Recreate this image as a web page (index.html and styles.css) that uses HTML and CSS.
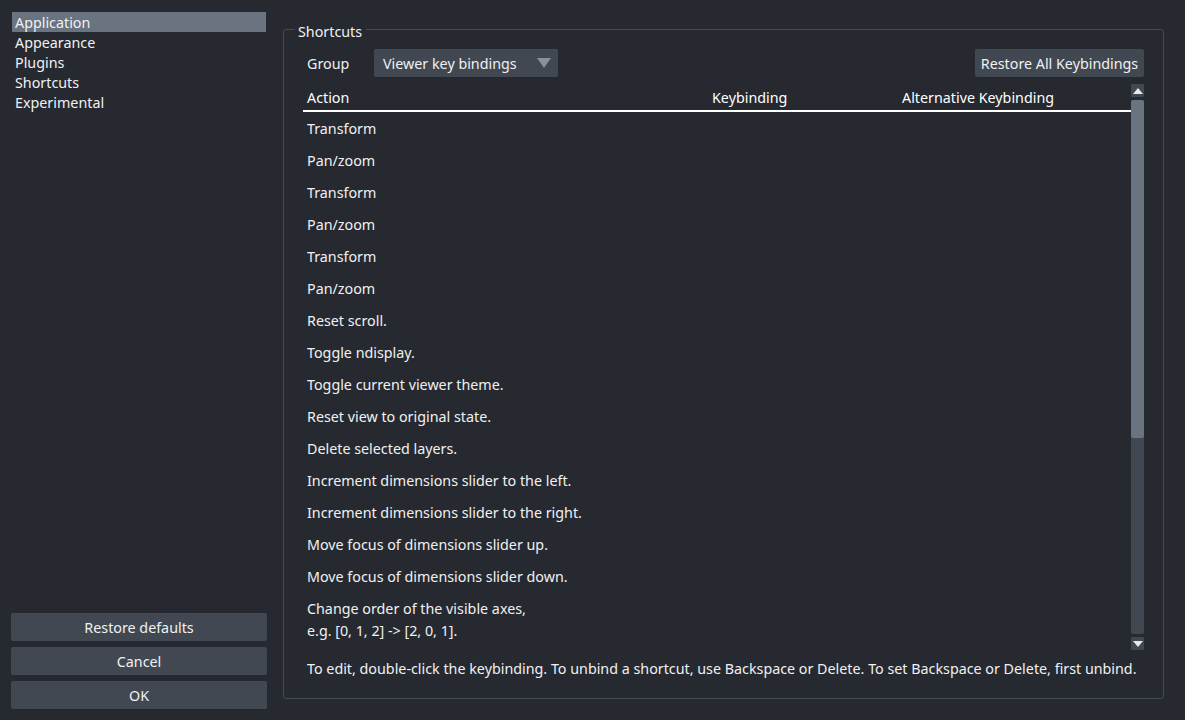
FILE: index.html
```html
<!DOCTYPE html>
<html>
<head>
<meta charset="utf-8">
<link rel="stylesheet" href="styles.css">
</head>
<body>
<div class="dialog">
  <div class="side">
    <ul class="nav">
      <li class="sel">Application</li>
      <li>Appearance</li>
      <li>Plugins</li>
      <li>Shortcuts</li>
      <li>Experimental</li>
    </ul>
    <div class="side-btns">
      <button class="btn">Restore defaults</button>
      <button class="btn">Cancel</button>
      <button class="btn">OK</button>
    </div>
  </div>
  <div class="main">
    <fieldset class="group">
      <legend>Shortcuts</legend>
      <div class="toolbar">
        <span class="glabel">Group</span>
        <div class="combo"><span>Viewer key bindings</span><span class="caret"></span></div>
        <div class="spacer"></div>
        <button class="btn restore">Restore All Keybindings</button>
      </div>
      <div class="tablewrap">
        <div class="table">
          <div class="thead">
            <div class="c1">Action</div><div class="c2">Keybinding</div><div class="c3">Alternative Keybinding</div>
          </div>
          <div class="rows">
            <div class="row"><div class="c1">Transform</div></div>
            <div class="row"><div class="c1">Pan/zoom</div></div>
            <div class="row"><div class="c1">Transform</div></div>
            <div class="row"><div class="c1">Pan/zoom</div></div>
            <div class="row"><div class="c1">Transform</div></div>
            <div class="row"><div class="c1">Pan/zoom</div></div>
            <div class="row"><div class="c1">Reset scroll.</div></div>
            <div class="row"><div class="c1">Toggle ndisplay.</div></div>
            <div class="row"><div class="c1">Toggle current viewer theme.</div></div>
            <div class="row"><div class="c1">Reset view to original state.</div></div>
            <div class="row"><div class="c1">Delete selected layers.</div></div>
            <div class="row"><div class="c1">Increment dimensions slider to the left.</div></div>
            <div class="row"><div class="c1">Increment dimensions slider to the right.</div></div>
            <div class="row"><div class="c1">Move focus of dimensions slider up.</div></div>
            <div class="row"><div class="c1">Move focus of dimensions slider down.</div></div>
            <div class="row tall"><div class="c1">Change order of the visible axes,<br>e.g. [0, 1, 2] -&gt; [2, 0, 1].</div></div>
          </div>
        </div>
        <div class="vscroll">
          <div class="sbtn"><span class="up"></span></div>
          <div class="track"><div class="handle"></div></div>
          <div class="sbtn"><span class="down"></span></div>
        </div>
      </div>
      <div class="hint">To edit, double-click the keybinding. To unbind a shortcut, use Backspace or Delete. To set Backspace or Delete, first unbind.</div>
    </fieldset>
  </div>
</div>
</body>
</html>
```

FILE: styles.css
```css
html, body {
  margin: 0;
  padding: 0;
  background: #262930;
  color: #f0f1f2;
  font-family: "Noto Sans", "DejaVu Sans", sans-serif;
  font-size: 14.3px;
  height: 720px;
  overflow: hidden;
}
.dialog {
  display: flex;
  height: 720px;
  box-sizing: border-box;
  padding: 11px 21px 11px 11px;
}
.side {
  width: 256px;
  display: flex;
  flex-direction: column;
}
.nav {
  list-style: none;
  margin: 0;
  padding: 1px;
  flex: 1;
}
.nav li {
  height: 20px;
  line-height: 22px;
  padding-left: 3px;
  overflow: hidden;
}
.nav li.sel {
  background: #6a7380;
}
.side-btns {
  display: flex;
  flex-direction: column;
  gap: 6px;
}
.btn {
  font-family: inherit;
  font-size: 14.3px;
  color: #f0f1f2;
  background: #414851;
  border: none;
  border-radius: 2px;
  height: 28px;
  padding: 0 4px;
  cursor: default;
}
.main {
  flex: 1;
  margin-left: 16px;
  display: flex;
  padding-top: 7px;
  padding-bottom: 10px;
}
.group {
  flex: 1;
  margin: 0;
  border: 1px solid #444a52;
  border-radius: 3px;
  padding: 0 19px 0 19px;
  display: flex;
  flex-direction: column;
  min-width: 0;
}
.group legend {
  padding: 6px 4px 0 3px;
  margin-left: -8px;
  line-height: 16px;
}
.toolbar {
  display: flex;
  align-items: center;
  margin-top: 9px;
  height: 28px;
}
.glabel {
  margin-left: 4px;
  width: 67px;
}
.combo {
  width: 184px;
  height: 28px;
  background: #414851;
  border-radius: 2px;
  display: flex;
  align-items: center;
  justify-content: space-between;
  padding: 0 7px 0 9px;
  box-sizing: border-box;
}
.caret {
  width: 0;
  height: 0;
  border-left: 7px solid transparent;
  border-right: 7px solid transparent;
  border-top: 10px solid #8a9199;
  margin-bottom: 1px;
}
.spacer { flex: 1; }
.restore { width: 169px; }
.tablewrap {
  display: flex;
  margin-top: 7px;
  height: 566px;
  overflow: hidden;
}
.table {
  flex: 1;
  min-width: 0;
  overflow: hidden;
}
.thead {
  display: flex;
  height: 26px;
  line-height: 28px;
  border-bottom: 2px solid #ffffff;
  color: #ffffff;
  overflow: hidden;
}
.c1 { width: 405px; padding-left: 4px; box-sizing: border-box; }
.c2 { width: 190px; padding-left: 4px; box-sizing: border-box; }
.c3 { flex: 1; padding-left: 4px; box-sizing: border-box; }
.row {
  display: flex;
  height: 32px;
  box-sizing: border-box;
  padding-top: 2px;
  align-items: center;
}
.row .c1 { width: auto; line-height: 22px; }
.row.tall { height: 54px; }
.vscroll {
  width: 13px;
  display: flex;
  flex-direction: column;
}
.sbtn {
  height: 13px;
  background: #414851;
  border-radius: 1px;
  display: flex;
  align-items: center;
  justify-content: center;
}
.up, .down {
  width: 0;
  height: 0;
  border-left: 5px solid transparent;
  border-right: 5px solid transparent;
}
.up { border-bottom: 6px solid #e6e8ea; }
.down { border-top: 6px solid #e6e8ea; }
.track {
  flex: 1;
  margin: 3px 0;
  background: #414851;
  border-radius: 2px;
}
.handle {
  height: 338px;
  background: #6a7380;
  border-radius: 2px;
}
.hint {
  margin-top: 8px;
  margin-left: 4px;
  line-height: 22px;
  white-space: nowrap;
}
```
